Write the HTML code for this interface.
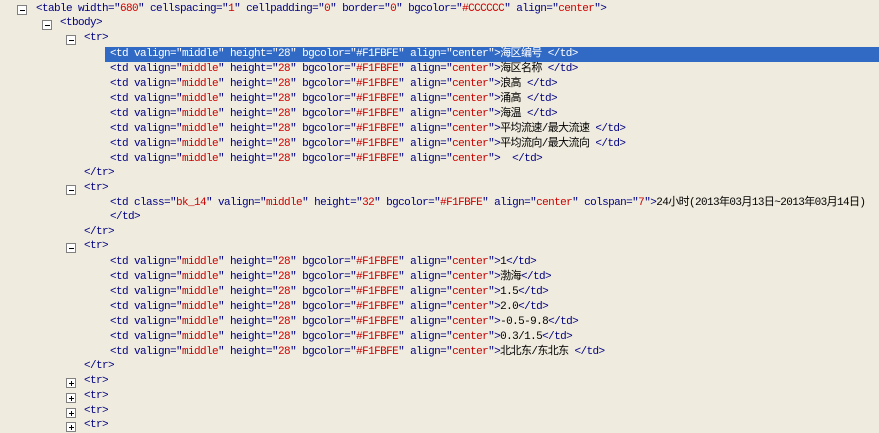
<!DOCTYPE html>
<html><head><meta charset="utf-8"><style>
body{margin:0;width:879px;height:429px;background:#EFEBDE;overflow:hidden;font-family:"Liberation Mono","Noto Sans CJK SC",monospace;font-size:11px;letter-spacing:-0.6px;color:#000080}
.l{position:absolute;white-space:pre;height:15px;line-height:15px}
.v{color:#CC0000}
.t{color:#000}
.sel{background:#316AC5;color:#fff;left:105px!important;right:0;padding-left:5px}
.sel .v,.sel .t{color:#fff}
.b{position:absolute;width:8px;height:8px;border:1px solid #808080;background:#fff}
.b:before{content:"";position:absolute;left:2px;top:4px;width:5px;height:1px;background:#000}
.p:after{content:"";position:absolute;left:4px;top:2px;width:1px;height:5px;background:#000}
</style></head><body>
<div class="b" style="left:17px;top:5px"></div>
<div class="l" style="left:36px;top:2px">&lt;table width="<span class="v">680</span>" cellspacing="<span class="v">1</span>" cellpadding="<span class="v">0</span>" border="<span class="v">0</span>" bgcolor="<span class="v">#CCCCCC</span>" align="<span class="v">center</span>"&gt;</div>
<div class="b" style="left:42px;top:20px"></div>
<div class="l" style="left:60px;top:16px">&lt;tbody&gt;</div>
<div class="b" style="left:66px;top:35px"></div>
<div class="l" style="left:84px;top:31px">&lt;tr&gt;</div>

<div class="l sel" style="left:110px;top:47px">&lt;td valign="<span class="v">middle</span>" height="<span class="v">28</span>" bgcolor="<span class="v">#F1FBFE</span>" align="<span class="v">center</span>"&gt;<span class="t">海区编号 </span>&lt;/td&gt;</div>
<div class="l" style="left:110px;top:62px">&lt;td valign="<span class="v">middle</span>" height="<span class="v">28</span>" bgcolor="<span class="v">#F1FBFE</span>" align="<span class="v">center</span>"&gt;<span class="t">海区名称 </span>&lt;/td&gt;</div>
<div class="l" style="left:110px;top:77px">&lt;td valign="<span class="v">middle</span>" height="<span class="v">28</span>" bgcolor="<span class="v">#F1FBFE</span>" align="<span class="v">center</span>"&gt;<span class="t">浪高 </span>&lt;/td&gt;</div>
<div class="l" style="left:110px;top:92px">&lt;td valign="<span class="v">middle</span>" height="<span class="v">28</span>" bgcolor="<span class="v">#F1FBFE</span>" align="<span class="v">center</span>"&gt;<span class="t">涌高 </span>&lt;/td&gt;</div>
<div class="l" style="left:110px;top:107px">&lt;td valign="<span class="v">middle</span>" height="<span class="v">28</span>" bgcolor="<span class="v">#F1FBFE</span>" align="<span class="v">center</span>"&gt;<span class="t">海温 </span>&lt;/td&gt;</div>
<div class="l" style="left:110px;top:122px">&lt;td valign="<span class="v">middle</span>" height="<span class="v">28</span>" bgcolor="<span class="v">#F1FBFE</span>" align="<span class="v">center</span>"&gt;<span class="t">平均流速/最大流速 </span>&lt;/td&gt;</div>
<div class="l" style="left:110px;top:137px">&lt;td valign="<span class="v">middle</span>" height="<span class="v">28</span>" bgcolor="<span class="v">#F1FBFE</span>" align="<span class="v">center</span>"&gt;<span class="t">平均流向/最大流向 </span>&lt;/td&gt;</div>
<div class="l" style="left:110px;top:152px">&lt;td valign="<span class="v">middle</span>" height="<span class="v">28</span>" bgcolor="<span class="v">#F1FBFE</span>" align="<span class="v">center</span>"&gt;<span class="t">  </span>&lt;/td&gt;</div>
<div class="l" style="left:84px;top:166px">&lt;/tr&gt;</div>
<div class="b" style="left:66px;top:185px"></div>
<div class="l" style="left:84px;top:181px">&lt;tr&gt;</div>
<div class="l" style="left:110px;top:196px">&lt;td class="<span class="v">bk_14</span>" valign="<span class="v">middle</span>" height="<span class="v">32</span>" bgcolor="<span class="v">#F1FBFE</span>" align="<span class="v">center</span>" colspan="<span class="v">7</span>"&gt;<span class="t">24小时(2013年03月13日~2013年03月14日)</span></div>
<div class="l" style="left:110px;top:210px">&lt;/td&gt;</div>
<div class="l" style="left:84px;top:225px">&lt;/tr&gt;</div>
<div class="b" style="left:66px;top:243px"></div>
<div class="l" style="left:84px;top:239px">&lt;tr&gt;</div>
<div class="l" style="left:110px;top:255px">&lt;td valign="<span class="v">middle</span>" height="<span class="v">28</span>" bgcolor="<span class="v">#F1FBFE</span>" align="<span class="v">center</span>"&gt;<span class="t">1</span>&lt;/td&gt;</div>
<div class="l" style="left:110px;top:270px">&lt;td valign="<span class="v">middle</span>" height="<span class="v">28</span>" bgcolor="<span class="v">#F1FBFE</span>" align="<span class="v">center</span>"&gt;<span class="t">渤海</span>&lt;/td&gt;</div>
<div class="l" style="left:110px;top:285px">&lt;td valign="<span class="v">middle</span>" height="<span class="v">28</span>" bgcolor="<span class="v">#F1FBFE</span>" align="<span class="v">center</span>"&gt;<span class="t">1.5</span>&lt;/td&gt;</div>
<div class="l" style="left:110px;top:300px">&lt;td valign="<span class="v">middle</span>" height="<span class="v">28</span>" bgcolor="<span class="v">#F1FBFE</span>" align="<span class="v">center</span>"&gt;<span class="t">2.0</span>&lt;/td&gt;</div>
<div class="l" style="left:110px;top:315px">&lt;td valign="<span class="v">middle</span>" height="<span class="v">28</span>" bgcolor="<span class="v">#F1FBFE</span>" align="<span class="v">center</span>"&gt;<span class="t">-0.5-9.8</span>&lt;/td&gt;</div>
<div class="l" style="left:110px;top:330px">&lt;td valign="<span class="v">middle</span>" height="<span class="v">28</span>" bgcolor="<span class="v">#F1FBFE</span>" align="<span class="v">center</span>"&gt;<span class="t">0.3/1.5</span>&lt;/td&gt;</div>
<div class="l" style="left:110px;top:345px">&lt;td valign="<span class="v">middle</span>" height="<span class="v">28</span>" bgcolor="<span class="v">#F1FBFE</span>" align="<span class="v">center</span>"&gt;<span class="t">北北东/东北东 </span>&lt;/td&gt;</div>
<div class="l" style="left:84px;top:359px">&lt;/tr&gt;</div>
<div class="b p" style="left:66px;top:378px"></div>
<div class="l" style="left:84px;top:374px">&lt;tr&gt;</div>
<div class="b p" style="left:66px;top:393px"></div>
<div class="l" style="left:84px;top:389px">&lt;tr&gt;</div>
<div class="b p" style="left:66px;top:408px"></div>
<div class="l" style="left:84px;top:404px">&lt;tr&gt;</div>
<div class="b p" style="left:66px;top:422px"></div>
<div class="l" style="left:84px;top:418px">&lt;tr&gt;</div>
</body></html>
